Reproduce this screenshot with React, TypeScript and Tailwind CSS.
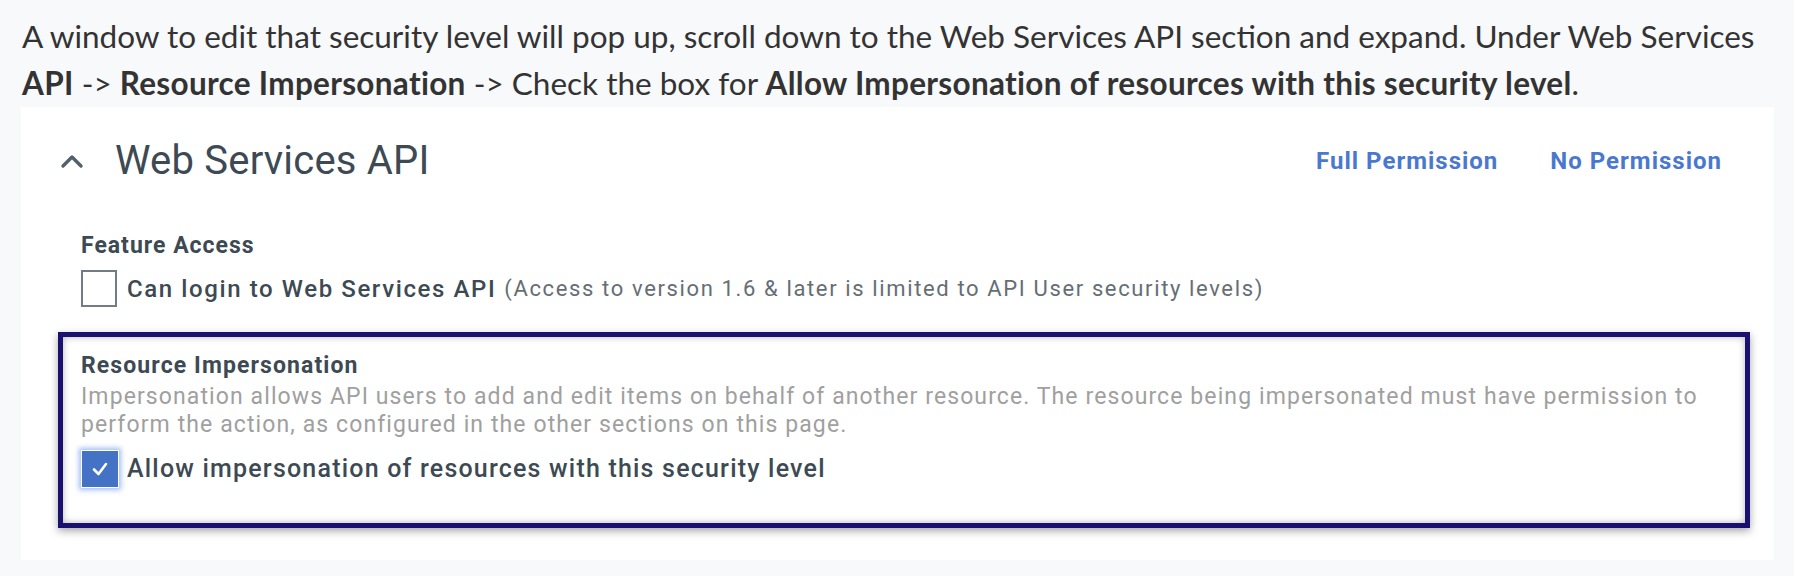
import React from "react";

export default function App() {
  return (
    <div className="w-[1794px] h-[576px] bg-[#f8f9fb] overflow-hidden">
      <p
        className="pl-[22px] pt-[13px] text-[31.5px] leading-[47px] text-[#333333] whitespace-nowrap"
        style={{ fontFamily: "Lato, 'Open Sans', sans-serif" }}
      >
        A window to edit that security level will pop up, scroll down to the Web Services API section and expand. Under Web Services
        <br />
        <b className="tracking-[0.3px]">API</b> -&gt; <b className="tracking-[0.3px]">Resource Impersonation</b> -&gt; Check the box for{" "}
        <b className="tracking-[0.3px]">Allow Impersonation of resources with this security level</b>.
      </p>

      <div
        className="ml-[21px] w-[1753px] h-[453px] bg-white pt-[32px]"
        style={{ fontFamily: "Roboto, 'Noto Sans', sans-serif" }}
      >
        <div className="flex items-center pl-[39px] pr-[52px] h-[44px]">
          <svg width="24" height="16" viewBox="0 0 24 16" className="mr-[31px]">
            <path d="M3 13 L12 4 L21 13" fill="none" stroke="#55616a" strokeWidth="3.4" strokeLinecap="round" strokeLinejoin="round" />
          </svg>
          <span className="text-[40px] leading-[44px] text-[#3d4a54] tracking-[0.2px]">Web Services API</span>
          <div className="ml-auto flex gap-[52px] text-[24px] font-bold text-[#4a78cf] tracking-[1px]">
            <span>Full Permission</span>
            <span>No Permission</span>
          </div>
        </div>

        <div className="pl-[60px] mt-[49px]">
          <div className="text-[23px] leading-[28px] font-bold text-[#3d4a54] tracking-[1px]">Feature Access</div>
          <div className="flex items-center mt-[10px]">
            <div className="w-[36px] h-[37px] border-2 border-[#717c84] bg-white" />
            <span className="ml-[10px] text-[24px] font-medium text-[#3d4a54] tracking-[1.6px]">Can login to Web Services API</span>
            <span className="ml-[8px] text-[22px] text-[#666e74] tracking-[1.63px]">(Access to version 1.6 &amp; later is limited to API User security levels)</span>
          </div>
        </div>

        <div className="ml-[37px] mt-[25px] w-[1692px] h-[196px] border-[5px] border-[#1a1070] shadow-[0_3px_8px_rgba(0,0,0,0.35),inset_0_0_7px_rgba(0,0,0,0.3)] pl-[18px] pt-[15px]">
          <div className="text-[23px] leading-[28px] font-bold text-[#3d4a54] tracking-[1.1px]">Resource Impersonation</div>
          <div className="mt-[3px] text-[23px] leading-[28px] text-[#a0a0a0] tracking-[1.1px] whitespace-nowrap">
            Impersonation allows API users to add and edit items on behalf of another resource. The resource being impersonated must have permission to
            <br />
            perform the action, as configured in the other sections on this page.
          </div>
          <div className="flex items-center mt-[11px]">
            <div className="w-[38px] h-[38px] bg-[#4472c4] border border-white shadow-[0_0_5px_2px_rgba(120,160,240,0.7)] flex items-center justify-center">
              <svg width="20" height="18" viewBox="0 0 20 18">
                <path d="M4 9.5 L8.5 14 L16 4" fill="none" stroke="white" strokeWidth="2.6" strokeLinecap="round" strokeLinejoin="round" />
              </svg>
            </div>
            <span className="ml-[8px] text-[25px] font-medium text-[#3d4a54] tracking-[1.2px]">Allow impersonation of resources with this security level</span>
          </div>
        </div>
      </div>
    </div>
  );
}
